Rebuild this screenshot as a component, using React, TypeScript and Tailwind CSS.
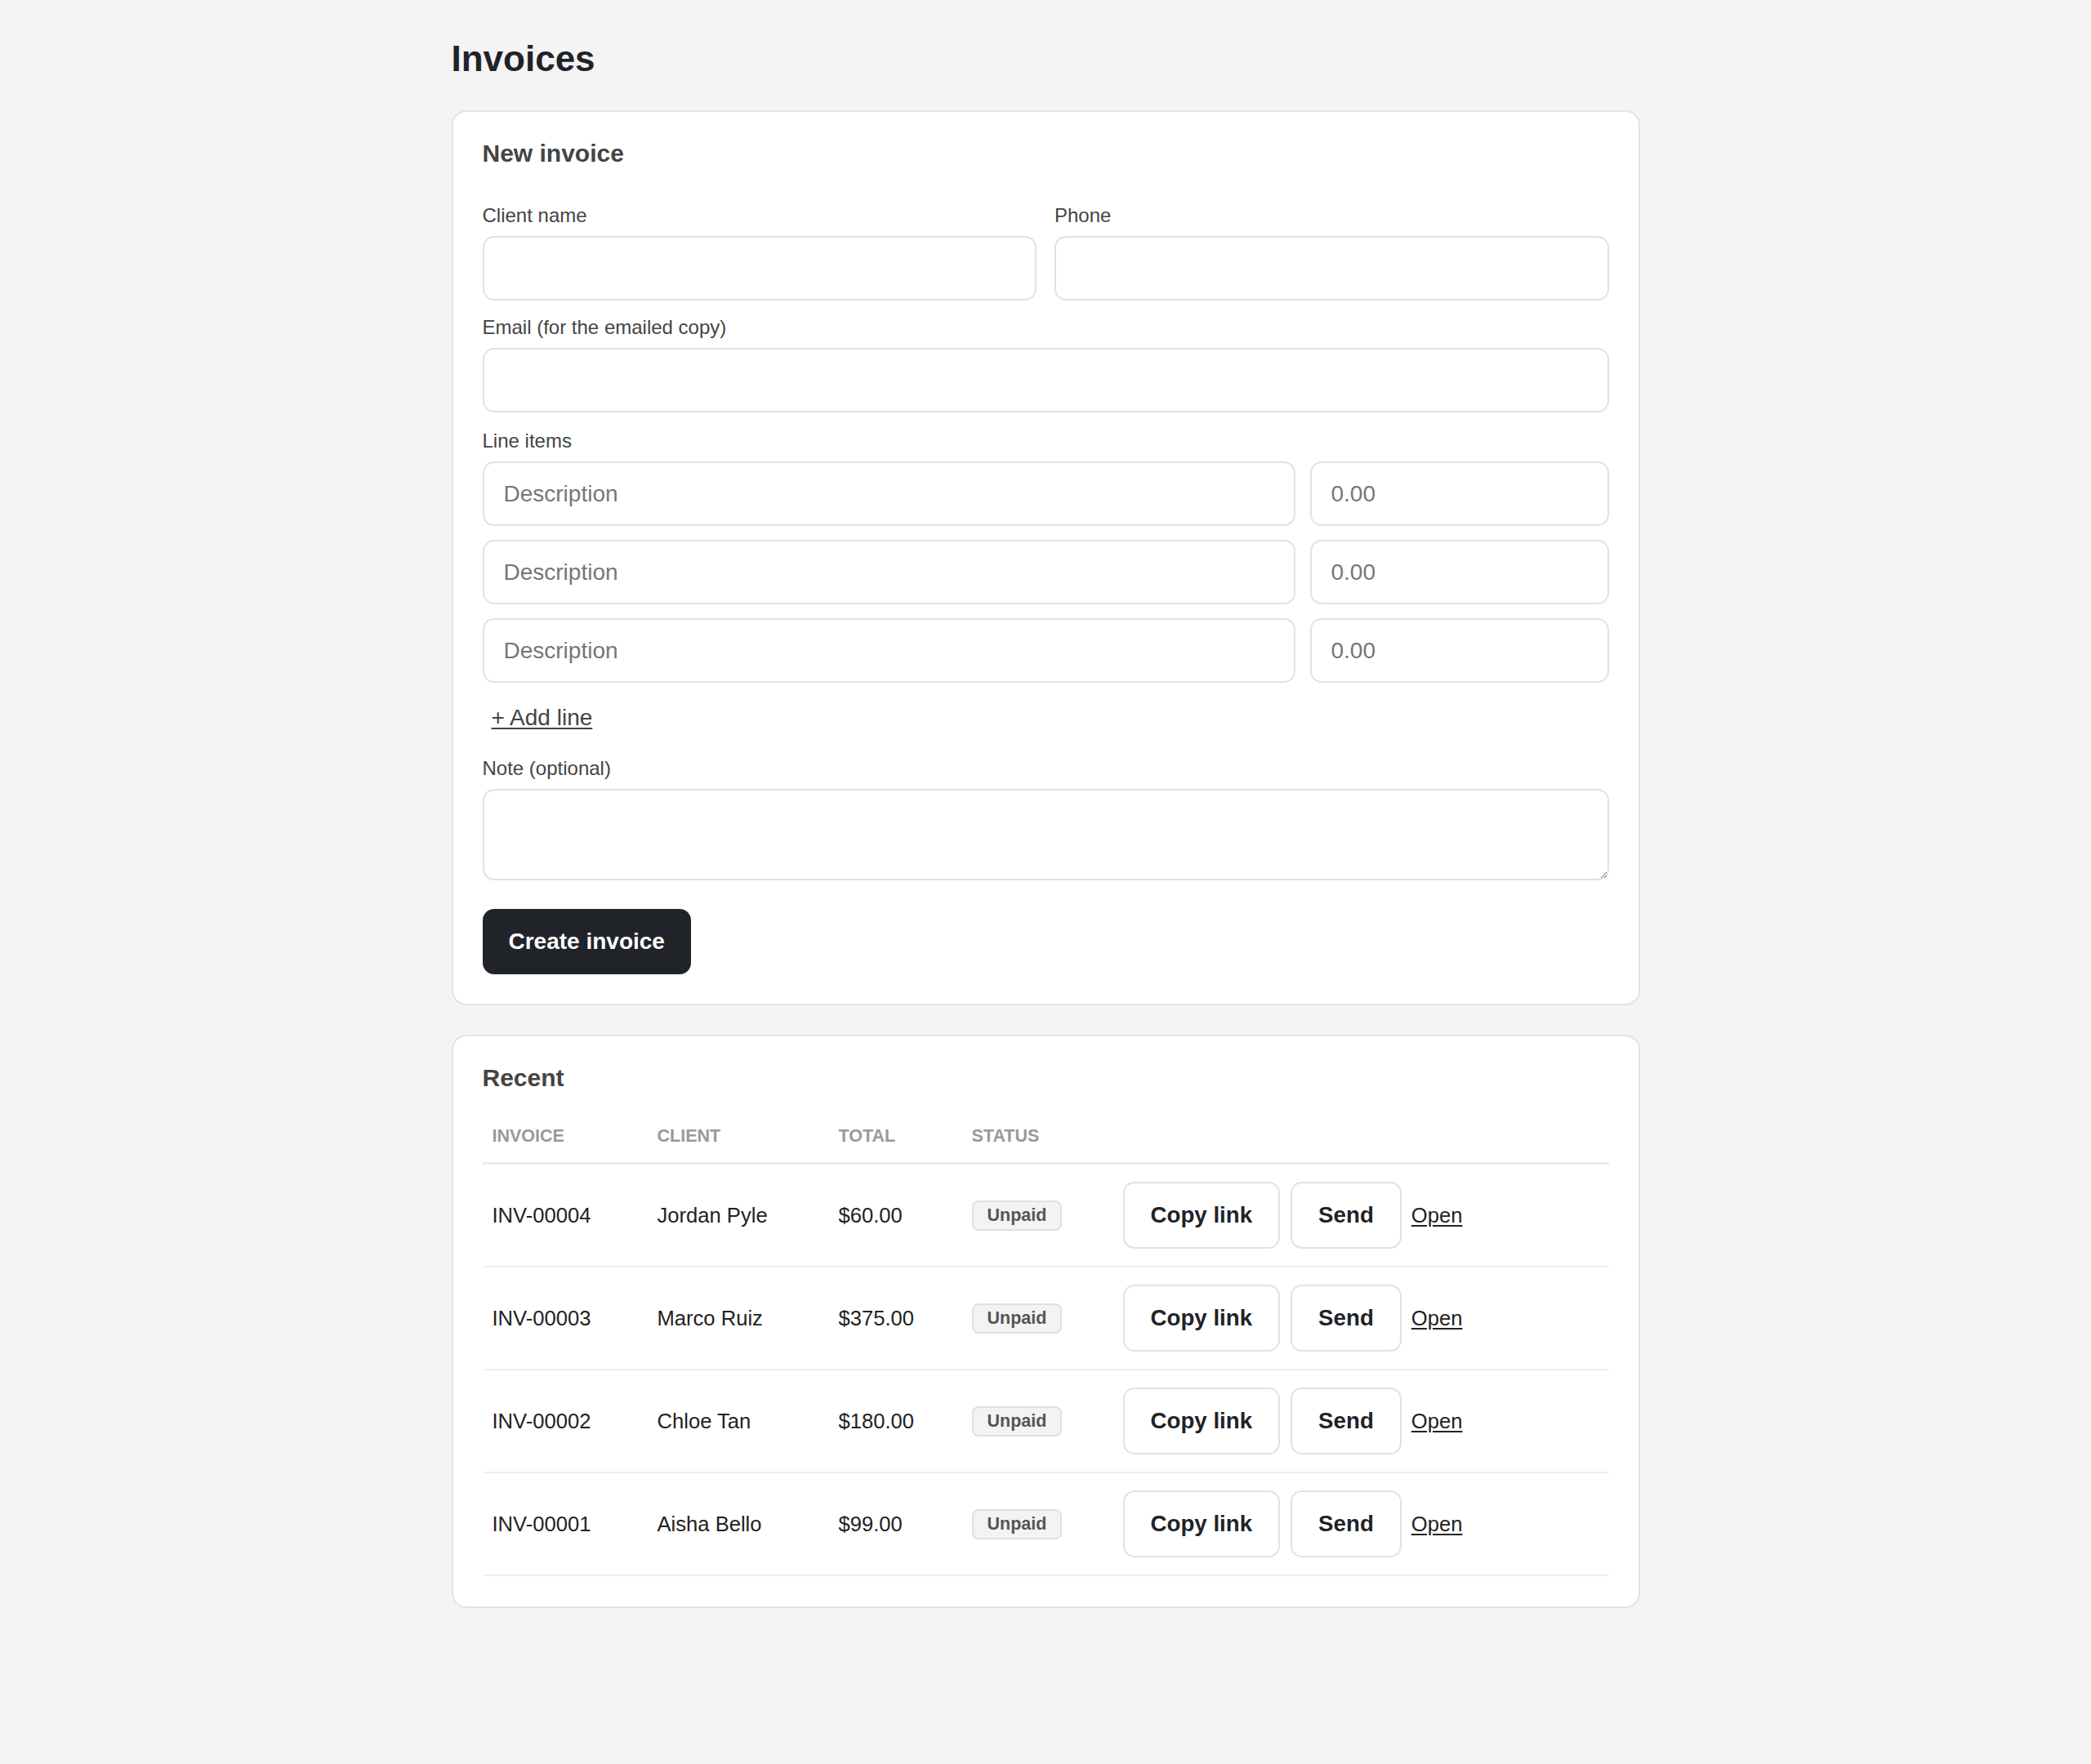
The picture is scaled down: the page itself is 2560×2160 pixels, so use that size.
import React from 'react';

const invoices = [
  { id: 'INV-00004', client: 'Jordan Pyle', total: '$60.00', status: 'Unpaid' },
  { id: 'INV-00003', client: 'Marco Ruiz', total: '$375.00', status: 'Unpaid' },
  { id: 'INV-00002', client: 'Chloe Tan', total: '$180.00', status: 'Unpaid' },
  { id: 'INV-00001', client: 'Aisha Bello', total: '$99.00', status: 'Unpaid' },
];

const inputClass =
  'block w-full h-[79px] rounded-[14px] border-2 border-[#e2e2e2] bg-white px-[24px] text-[28px] text-[#222] placeholder:text-[#767676] outline-none';

function Label({ children }: { children: React.ReactNode }) {
  return <label className="block text-[24px] leading-[28px] text-[#444] mb-[11px]">{children}</label>;
}

export default function App() {
  return (
    <div className="min-h-screen bg-[#f4f4f4] font-['Liberation_Sans',Arial,sans-serif]">
      <div className="w-[1455px] mx-auto pt-[46px] pb-[60px]">
        <h1 className="text-[44px] leading-[52px] font-bold text-[#1f2328] mb-[37px]">Invoices</h1>

        <section className="rounded-[18px] border-2 border-[#e4e4e4] bg-white p-[36px]">
          <h2 className="text-[30px] leading-[30px] font-bold text-[#444] mb-[47px]">New invoice</h2>

          <div className="grid grid-cols-2 gap-[22px] mb-[19px]">
            <div>
              <Label>Client name</Label>
              <input className={inputClass} />
            </div>
            <div>
              <Label>Phone</Label>
              <input className={inputClass} />
            </div>
          </div>

          <div className="mb-[21px]">
            <Label>Email (for the emailed copy)</Label>
            <input className={inputClass} />
          </div>

          <Label>Line items</Label>
          <div className="flex flex-col gap-[17px]">
            {[0, 1, 2].map(i => (
              <div key={i} className="flex gap-[18px]">
                <input className={inputClass + ' flex-1'} placeholder="Description" />
                <input className={inputClass + ' !w-[366px] shrink-0'} placeholder="0.00" />
              </div>
            ))}
          </div>

          <button className="mt-[27px] px-[11px] text-[28px] leading-[32px] text-[#444] underline underline-offset-[3px]">
            + Add line
          </button>

          <div className="mt-[32px]">
            <Label>Note (optional)</Label>
            <textarea className="block w-full h-[112px] rounded-[14px] border-2 border-[#e2e2e2] bg-white px-[24px] py-[16px] text-[28px] outline-none" />
          </div>

          <button className="mt-[35px] h-[80px] rounded-[14px] bg-[#202428] px-[32px] text-[28px] font-bold text-white">
            Create invoice
          </button>
        </section>

        <section className="mt-[36px] rounded-[18px] border-2 border-[#e4e4e4] bg-white px-[36px] pt-[36px] pb-[37px]">
          <h2 className="text-[30px] leading-[30px] font-bold text-[#444]">Recent</h2>

          <table className="mt-[26px] w-full border-collapse text-left">
            <thead>
              <tr className="border-b-[3px] border-[#ececec]">
                <th className="w-[202px] px-[12px] pt-[17px] pb-[19px] text-[21.5px] leading-[26px] font-bold text-[#999] uppercase">Invoice</th>
                <th className="w-[222px] px-[12px] pt-[17px] pb-[19px] text-[21.5px] leading-[26px] font-bold text-[#999] uppercase">Client</th>
                <th className="w-[163px] px-[12px] pt-[17px] pb-[19px] text-[21.5px] leading-[26px] font-bold text-[#999] uppercase">Total</th>
                <th className="w-[185px] px-[12px] pt-[17px] pb-[19px] text-[21.5px] leading-[26px] font-bold text-[#999] uppercase">Status</th>
                <th className="px-[12px] pt-[17px] pb-[19px]"></th>
              </tr>
            </thead>
            <tbody>
              {invoices.map(inv => (
                <tr key={inv.id} className="border-b-2 border-[#efefef]">
                  <td className="px-[12px] py-[21px] align-middle text-[25.6px] text-[#222]">{inv.id}</td>
                  <td className="px-[12px] py-[21px] align-middle text-[25.6px] text-[#222]">{inv.client}</td>
                  <td className="px-[12px] py-[21px] align-middle text-[25.6px] text-[#222]">{inv.total}</td>
                  <td className="px-[12px] py-[21px] align-middle">
                    <span className="inline-flex h-[37px] items-center rounded-[8px] border-2 border-[#e0e0e0] bg-[#f3f3f3] px-[17px] text-[21.5px] font-bold text-[#555]">
                      {inv.status}
                    </span>
                  </td>
                  <td className="px-[12px] py-[21px] align-middle">
                    <div className="flex items-center gap-[13px]">
                      <button className="h-[82px] rounded-[14px] border-2 border-[#e2e2e2] bg-white px-[32px] text-[27.7px] font-bold text-[#1f2328]">
                        Copy link
                      </button>
                      <button className="h-[82px] rounded-[14px] border-2 border-[#e2e2e2] bg-white px-[32px] text-[27.7px] font-bold text-[#1f2328]">
                        Send
                      </button>
                      <a href="#" className="-ml-[1px] text-[25.6px] text-[#222] underline underline-offset-[3px]">
                        Open
                      </a>
                    </div>
                  </td>
                </tr>
              ))}
            </tbody>
          </table>
        </section>
      </div>
    </div>
  );
}
